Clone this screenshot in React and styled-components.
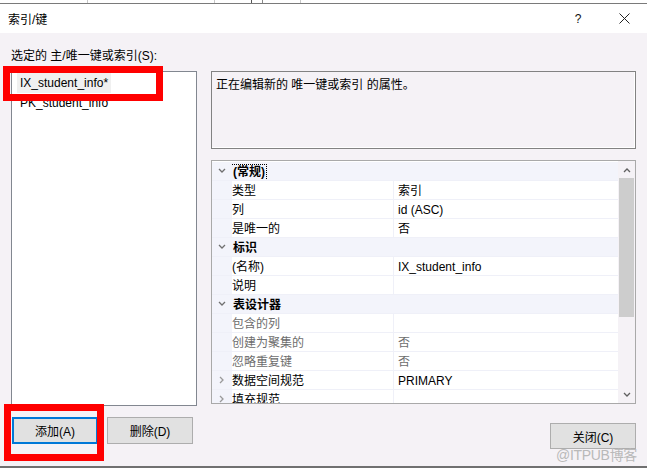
import React from 'react';
import styled, { createGlobalStyle } from 'styled-components';

const GlobalStyle = createGlobalStyle`
    html, body {
        margin: 0;
        padding: 0;
        background: #ffffff;
    }
    body {
        font-family: "Liberation Sans", "Noto Sans CJK SC", sans-serif;
        font-size: 12px;
        color: #000;
    }
`;

const Window = styled.div`
    position: relative;
    width: 647px;
    height: 468px;
    overflow: hidden;
    display: flex;
    flex-direction: column;
    background: #f5f2f6;
    border-bottom: 2px solid #707070;
    box-sizing: border-box;
`;

const BehindStrip = styled.div`
    height: 3px;
    flex: none;
    border-bottom: 1px solid #7a7a7a;
    background:
        linear-gradient(#c8c8c8, #c8c8c8) 87px 0 / 1px 100% no-repeat,
        linear-gradient(#c8c8c8, #c8c8c8) 214px 0 / 1px 100% no-repeat,
        linear-gradient(#555, #555) 251px 0 / 1px 100% no-repeat,
        linear-gradient(#888, #888) 262px 0 / 1px 100% no-repeat,
        linear-gradient(#c8c8c8, #c8c8c8) 300px 0 / 1px 100% no-repeat,
        #ffffff;
`;

const TitleBar = styled.div`
    height: 29px;
    flex: none;
    background: #ffffff;
    display: flex;
    align-items: center;
    padding: 0 0 0 8px;
`;

const Title = styled.span`
    flex: 1;
`;

const TitleButton = styled.span`
    width: 46px;
    display: flex;
    justify-content: center;
    align-items: center;
    color: #111;
`;

const Body = styled.div`
    flex: 1;
    display: flex;
    flex-direction: column;
    padding: 0 11px;
`;

const Label = styled.div`
    height: 38px;
    line-height: 14px;
    padding-top: 16px;
    box-sizing: border-box;
`;

const Main = styled.div`
    display: flex;
    gap: 14px;
`;

const LeftCol = styled.div`
    width: 186px;
    display: flex;
    flex-direction: column;
    gap: 11px;
`;

const RightCol = styled.div`
    flex: 1;
    display: flex;
    flex-direction: column;
`;

const List = styled.div`
    height: 335px;
    box-sizing: border-box;
    background: #ffffff;
    border: 1px solid #828790;
    padding: 1px 5px;
`;

const ListItem = styled.div`
    height: 20px;
    line-height: 20px;
    padding: 0 3px;
    display: inline-block;
    background: ${(p) => (p.selected ? '#f0f0f0' : 'transparent')};
    white-space: nowrap;
`;

const ButtonRow = styled.div`
    display: flex;
    gap: 9px;
    padding-left: 1px;
`;

const Button = styled.div`
    width: ${(p) => p.w || 86}px;
    height: ${(p) => p.h || 27}px;
    box-sizing: border-box;
    display: flex;
    align-items: center;
    justify-content: center;
    background: #e1e1e1;
    border: ${(p) => (p.focused ? '2px solid #0078d7' : '1px solid #adadad')};
`;

const Description = styled.div`
    height: 78px;
    box-sizing: border-box;
    border: 1px solid #828282;
    box-shadow: inset -1px -1px 0 #ffffff;
    padding: 6px 4px;
    line-height: 14px;
`;

const Grid = styled.div`
    margin-top: 11px;
    height: 244px;
    box-sizing: border-box;
    border: 1px solid #a9a9a9;
    display: flex;
    background: #ffffff;
    overflow: hidden;
`;

const Rows = styled.div`
    flex: 1;
    padding-top: 1px;
`;

const Row = styled.div`
    display: grid;
    grid-template-columns: 20px 161px 1fr;
    height: 19px;
    box-sizing: border-box;
    border-bottom: 1px solid #eff0f8;
    background: ${(p) => (p.category ? '#f3f4fb' : '#ffffff')};
    color: ${(p) => (p.disabled ? '#6d6d6d' : '#000')};
`;

const Gutter = styled.div`
    background: #f3f4fb;
    display: flex;
    align-items: center;
    justify-content: center;
`;

const Cell = styled.div`
    line-height: 18px;
    padding-top: 1px;
    padding-left: ${(p) => (p.value ? 4 : 0)}px;
    border-left: ${(p) => (p.value ? '1px solid #eff0f8' : 'none')};
    white-space: nowrap;
    overflow: hidden;
`;

const CategoryName = styled.span`
    font-weight: bold;
    display: inline-block;
    line-height: 15px;
    padding: 0 1px;
    outline: ${(p) => (p.focused ? '1px dotted #000' : 'none')};
    outline-offset: 0;
`;

const Scrollbar = styled.div`
    width: 17px;
    flex: none;
    background: #f5f2f6;
    display: flex;
    flex-direction: column;
    align-items: center;
`;

const ScrollArrow = styled.div`
    height: 17px;
    width: 100%;
    display: flex;
    align-items: center;
    justify-content: center;
`;

const Thumb = styled.div`
    width: 15px;
    height: 139px;
    background: #cdcdcd;
`;

const Track = styled.div`
    flex: 1;
`;

const CloseRow = styled.div`
    display: flex;
    justify-content: flex-end;
    margin-top: 19px;
`;

const RedMark = styled.div`
    position: absolute;
    border: 7px solid #ff0000;
    box-sizing: border-box;
    pointer-events: none;
`;

const Watermark = styled.div`
    position: absolute;
    left: 556px;
    top: 444px;
    font-size: 14px;
    color: #b9b9b9;
    letter-spacing: -0.3px;
`;

const Chevron = ({ dir = 'down', color = '#707070' }) => {
    const pts = {
        down: '1,2 4,5 7,2',
        right: '2,1 5,4 2,7',
        up: '1,6 4,3 7,6',
    }[dir];
    return (
        <svg width="8" height="8" viewBox="0 0 8 8">
            <polyline points={pts} fill="none" stroke={color} strokeWidth="1.3" />
        </svg>
    );
};

const CloseIcon = () => (
    <svg width="11" height="11" viewBox="0 0 11 11">
        <path d="M0.5 0.5 L10.5 10.5 M10.5 0.5 L0.5 10.5" stroke="#222" strokeWidth="1" fill="none" />
    </svg>
);

const rows = [
    { cat: true, name: '(常规)', focused: true },
    { name: '类型', value: '索引' },
    { name: '列', value: 'id (ASC)' },
    { name: '是唯一的', value: '否' },
    { cat: true, name: '标识' },
    { name: '(名称)', value: 'IX_student_info' },
    { name: '说明', value: '' },
    { cat: true, name: '表设计器' },
    { name: '包含的列', value: '', disabled: true },
    { name: '创建为聚集的', value: '否', disabled: true },
    { name: '忽略重复键', value: '否', disabled: true },
    { name: '数据空间规范', value: 'PRIMARY', expand: true },
    { name: '填充规范', value: '', expand: true },
];

const App = () => {
    return (
        <>
            <GlobalStyle />
            <Window>
                <BehindStrip />
                <TitleBar>
                    <Title>索引/键</Title>
                    <TitleButton>?</TitleButton>
                    <TitleButton><CloseIcon /></TitleButton>
                </TitleBar>
                <Body>
                    <Label>选定的 主/唯一键或索引(S):</Label>
                    <Main>
                        <LeftCol>
                            <List>
                                <div><ListItem selected>IX_student_info*</ListItem></div>
                                <div><ListItem>PK_student_info</ListItem></div>
                            </List>
                            <ButtonRow>
                                <Button focused>添加(A)</Button>
                                <Button>删除(D)</Button>
                            </ButtonRow>
                        </LeftCol>
                        <RightCol>
                            <Description>正在编辑新的 唯一键或索引 的属性。</Description>
                            <Grid>
                                <Rows>
                                    {rows.map((r, i) =>
                                        r.cat ? (
                                            <Row key={i} category>
                                                <Gutter><Chevron dir="down" /></Gutter>
                                                <Cell>
                                                    <CategoryName focused={r.focused}>{r.name}</CategoryName>
                                                </Cell>
                                                <Cell />
                                            </Row>
                                        ) : (
                                            <Row key={i} disabled={r.disabled}>
                                                <Gutter>{r.expand && <Chevron dir="right" color="#9a9a9a" />}</Gutter>
                                                <Cell>{r.name}</Cell>
                                                <Cell value>{r.value}</Cell>
                                            </Row>
                                        )
                                    )}
                                </Rows>
                                <Scrollbar>
                                    <ScrollArrow><Chevron dir="up" color="#606060" /></ScrollArrow>
                                    <Thumb />
                                    <Track />
                                    <ScrollArrow><Chevron dir="down" color="#606060" /></ScrollArrow>
                                </Scrollbar>
                            </Grid>
                            <CloseRow>
                                <Button w={86} h={26}>关闭(C)</Button>
                            </CloseRow>
                        </RightCol>
                    </Main>
                </Body>
                <RedMark style={{ left: 3, top: 66, width: 160, height: 35 }} />
                <RedMark style={{ left: 4, top: 404, width: 100, height: 57 }} />
                <Watermark>@ITPUB博客</Watermark>
            </Window>
        </>
    );
};

export default App;
